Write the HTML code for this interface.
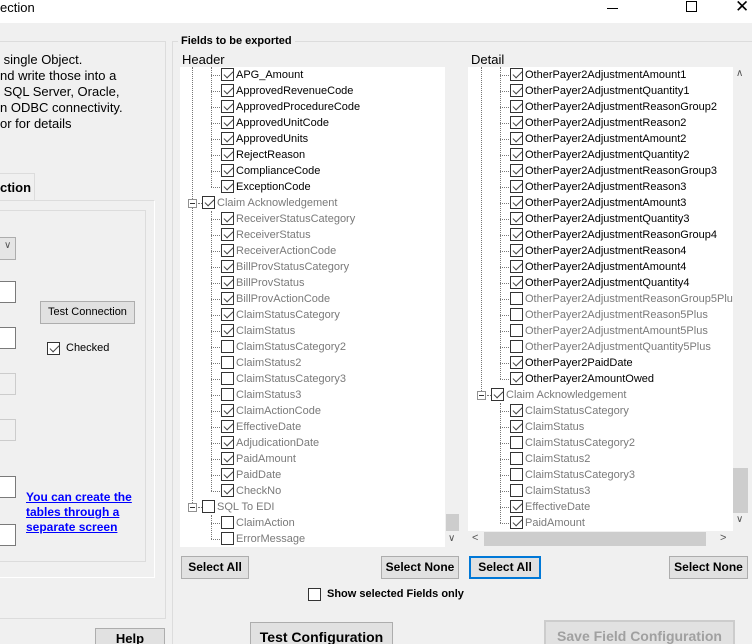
<!DOCTYPE html>
<html><head><meta charset="utf-8"><style>
*{box-sizing:border-box;margin:0;padding:0}
html,body{width:752px;height:644px;overflow:hidden}
body{background:#f0f0f0;font-family:"Liberation Sans",sans-serif;font-size:12px;color:#000;position:relative}
.a{position:absolute}
.title{left:0;top:0;width:752px;height:23px;background:#fff}
.t{position:absolute;font-size:12px;white-space:nowrap}
.cb{position:absolute;width:13px;height:13px;border:1px solid #333;background:#fff}
.cb.k::after{content:"";position:absolute;left:2px;top:2px;width:8px;height:4px;border-left:1.5px solid #444;border-bottom:1.5px solid #444;transform:rotate(-45deg);transform-origin:center}
.list{position:absolute;background:#fff;overflow:hidden}
.row{position:absolute;height:16px;white-space:nowrap;font-size:11px;line-height:16px}
.g{color:#7a7a7a}
.dl{position:absolute;border-left:1px dotted #777;width:0}
.dh{position:absolute;border-top:1px dotted #777;height:0}
.exp{position:absolute;width:9px;height:9px;border:1px solid #919191;background:#fff}
.exp::after{content:"";position:absolute;left:1px;top:3px;width:5px;height:1px;background:#333}
.btn{position:absolute;background:#e1e1e1;border:1px solid #adadad;font-weight:bold;font-size:12px;text-align:center}
.inp{position:absolute;background:#fff;border:1px solid #7a7a7a}
</style></head><body>
<div class="a title"></div>
<div class="t" style="left:0;top:0px;font-size:13px">ection</div>
<div class="a" style="left:607px;top:8px;width:11px;height:1px;background:#000"></div>
<div class="a" style="left:686px;top:1px;width:11px;height:11px;border:1px solid #000"></div>
<div class="t" style="left:735px;top:-3px;font-size:17px">✕</div>

<!-- left group -->
<div class="a" style="left:-2px;top:41px;width:168px;height:578px;border:1px solid #dcdcdc"></div>
<div class="t" style="left:0;top:52px;font-size:13px;line-height:16px">&nbsp;single Object.<br>nd write those into a<br>&nbsp;SQL Server, Oracle,<br>n ODBC connectivity.<br>or for details</div>
<div class="a" style="left:-2px;top:173px;width:37px;height:28px;background:#f0f0f0;border:1px solid #dcdcdc;border-bottom:none"></div>
<div class="t" style="left:0;top:180px;font-weight:bold;font-size:13px">ction</div>
<div class="a" style="left:-2px;top:200px;width:157px;height:378px;border:1px solid #dcdcdc;border-right-color:#fff;border-bottom-color:#fff"></div>
<div class="a" style="left:-2px;top:210px;width:148px;height:352px;border:1px solid #dcdcdc"></div>
<div class="a" style="left:-2px;top:237px;width:18px;height:23px;background:#e5e5e5;border:1px solid #adadad"></div>
<div class="t" style="left:4px;top:240px;color:#555;font-size:10px">∨</div>
<div class="inp" style="left:-2px;top:281px;width:18px;height:22px"></div>
<div class="inp" style="left:-2px;top:327px;width:18px;height:22px"></div>
<div class="inp" style="left:-2px;top:373px;width:18px;height:22px;border-color:#ccc;background:#f0f0f0"></div>
<div class="inp" style="left:-2px;top:419px;width:18px;height:22px;border-color:#ccc;background:#f0f0f0"></div>
<div class="inp" style="left:-2px;top:476px;width:18px;height:22px"></div>
<div class="inp" style="left:-2px;top:524px;width:18px;height:22px"></div>
<div class="btn" style="left:40px;top:301px;width:95px;height:23px;font-weight:normal;font-size:11px;line-height:21px">Test Connection</div>
<div class="cb k" style="left:47px;top:342px"></div>
<div class="t" style="left:66px;top:342px;font-size:11px">Checked</div>
<div class="t" style="left:26px;top:490px;color:#00f;text-decoration:underline;font-weight:bold;line-height:15px">You can create the<br>tables through a<br>separate screen</div>
<div class="btn" style="left:95px;top:628px;width:70px;height:24px;font-size:13px;line-height:20px">Help</div>

<!-- right group -->
<div class="a" style="left:172px;top:41px;width:600px;height:620px;border-left:1px solid #dcdcdc;border-top:1px solid #dcdcdc"></div>
<div class="t" style="left:178px;top:35px;font-weight:bold;font-size:11px;background:#f0f0f0;padding:0 3px">Fields to be exported</div>
<div class="t" style="left:182px;top:52px;font-size:13px">Header</div>
<div class="t" style="left:471px;top:52px;font-size:13px">Detail</div>

<div class="list" style="left:180px;top:67px;width:265px;height:480px">
<div class="dl" style="left:12px;top:0;height:444px"></div>
<div class="dl" style="left:31px;top:0;height:120px"></div>
<div class="dl" style="left:31px;top:144px;height:280px"></div>
<div class="dl" style="left:31px;top:448px;height:24px"></div>
<div id="H"></div>
</div>
<div class="a" style="left:445px;top:67px;width:15px;height:480px;background:#f0f0f0"></div>
<div class="a" style="left:446px;top:514px;width:13px;height:17px;background:#cdcdcd"></div>
<div class="t" style="left:448px;top:533px;color:#555;font-size:10px">∨</div>

<div class="list" style="left:468px;top:67px;width:265px;height:464px">
<div class="dl" style="left:13px;top:0;height:328px"></div>
<div class="dl" style="left:32px;top:0;height:312px"></div>
<div class="dl" style="left:32px;top:336px;height:120px"></div>
<div id="D"></div>
</div>
<div class="a" style="left:733px;top:67px;width:15px;height:464px;background:#f0f0f0"></div>
<div class="a" style="left:733px;top:468px;width:15px;height:45px;background:#cdcdcd"></div>
<div class="t" style="left:736px;top:68px;color:#555;font-size:10px">∧</div>
<div class="t" style="left:736px;top:514px;color:#555;font-size:10px">∨</div>
<div class="a" style="left:468px;top:531px;width:265px;height:16px;background:#f0f0f0"></div>
<div class="a" style="left:484px;top:532px;width:222px;height:14px;background:#cdcdcd"></div>
<div class="t" style="left:472px;top:532px;color:#555;font-size:11px">&lt;</div>
<div class="t" style="left:720px;top:532px;color:#555;font-size:11px">&gt;</div>

<div class="btn" style="left:181px;top:556px;width:68px;height:23px;line-height:21px">Select All</div>
<div class="btn" style="left:381px;top:556px;width:78px;height:23px;line-height:21px">Select None</div>
<div class="btn" style="left:469px;top:556px;width:72px;height:23px;line-height:19px;border:2px solid #0078d7">Select All</div>
<div class="btn" style="left:669px;top:556px;width:79px;height:23px;line-height:21px">Select None</div>
<div class="cb" style="left:308px;top:588px"></div>
<div class="t" style="left:327px;top:588px;font-weight:bold;font-size:11px">Show selected Fields only</div>
<div class="btn" style="left:250px;top:622px;width:143px;height:30px;font-size:14px;line-height:28px">Test Configuration</div>
<div class="btn" style="left:544px;top:620px;width:191px;height:30px;font-size:14px;line-height:28px;color:#a0a0a0;border:2px solid #ccc">Save Field Configuration</div>

<script>
function build(id,items,base){
 var h='';
 items.forEach(function(it,i){
  var y=i*16,lvl=it[0],txt=it[1],chk=it[2],gr=it[3];
  if(lvl==1){
   h+='<div class="exp" style="left:'+(base-4)+'px;top:'+(y+4)+'px"></div>';
   h+='<div class="dh" style="left:'+(base+6)+'px;top:'+(y+8)+'px;width:4px"></div>';
   h+='<div class="cb'+(chk?' k':'')+'" style="left:'+(base+10)+'px;top:'+(y+1)+'px"></div>';
   h+='<div class="row'+(gr?' g':'')+'" style="left:'+(base+25)+'px;top:'+y+'px">'+txt+'</div>';
  }else{
   h+='<div class="dh" style="left:'+(base+19)+'px;top:'+(y+8)+'px;width:9px"></div>';
   h+='<div class="cb'+(chk?' k':'')+'" style="left:'+(base+29)+'px;top:'+(y+1)+'px"></div>';
   h+='<div class="row'+(gr?' g':'')+'" style="left:'+(base+44)+'px;top:'+y+'px">'+txt+'</div>';
  }
 });
 document.getElementById(id).innerHTML=h;
}
var H=[[2,'APG_Amount',1,0],[2,'ApprovedRevenueCode',1,0],[2,'ApprovedProcedureCode',1,0],[2,'ApprovedUnitCode',1,0],[2,'ApprovedUnits',1,0],[2,'RejectReason',1,0],[2,'ComplianceCode',1,0],[2,'ExceptionCode',1,0],
[1,'Claim Acknowledgement',1,1],[2,'ReceiverStatusCategory',1,1],[2,'ReceiverStatus',1,1],[2,'ReceiverActionCode',1,1],[2,'BillProvStatusCategory',1,1],[2,'BillProvStatus',1,1],[2,'BillProvActionCode',1,1],[2,'ClaimStatusCategory',1,1],[2,'ClaimStatus',1,1],[2,'ClaimStatusCategory2',0,1],[2,'ClaimStatus2',0,1],[2,'ClaimStatusCategory3',0,1],[2,'ClaimStatus3',0,1],[2,'ClaimActionCode',1,1],[2,'EffectiveDate',1,1],[2,'AdjudicationDate',1,1],[2,'PaidAmount',1,1],[2,'PaidDate',1,1],[2,'CheckNo',1,1],
[1,'SQL To EDI',0,1],[2,'ClaimAction',0,1],[2,'ErrorMessage',0,1]];
var p='OtherPayer2';
var D=[[2,p+'AdjustmentAmount1',1,0],[2,p+'AdjustmentQuantity1',1,0],[2,p+'AdjustmentReasonGroup2',1,0],[2,p+'AdjustmentReason2',1,0],[2,p+'AdjustmentAmount2',1,0],[2,p+'AdjustmentQuantity2',1,0],[2,p+'AdjustmentReasonGroup3',1,0],[2,p+'AdjustmentReason3',1,0],[2,p+'AdjustmentAmount3',1,0],[2,p+'AdjustmentQuantity3',1,0],[2,p+'AdjustmentReasonGroup4',1,0],[2,p+'AdjustmentReason4',1,0],[2,p+'AdjustmentAmount4',1,0],[2,p+'AdjustmentQuantity4',1,0],[2,p+'AdjustmentReasonGroup5Plus',0,1],[2,p+'AdjustmentReason5Plus',0,1],[2,p+'AdjustmentAmount5Plus',0,1],[2,p+'AdjustmentQuantity5Plus',0,1],[2,p+'PaidDate',1,0],[2,p+'AmountOwed',1,0],
[1,'Claim Acknowledgement',1,1],[2,'ClaimStatusCategory',1,1],[2,'ClaimStatus',1,1],[2,'ClaimStatusCategory2',0,1],[2,'ClaimStatus2',0,1],[2,'ClaimStatusCategory3',0,1],[2,'ClaimStatus3',0,1],[2,'EffectiveDate',1,1],[2,'PaidAmount',1,1]];
build('H',H,12);build('D',D,13);
</script>
</body></html>
